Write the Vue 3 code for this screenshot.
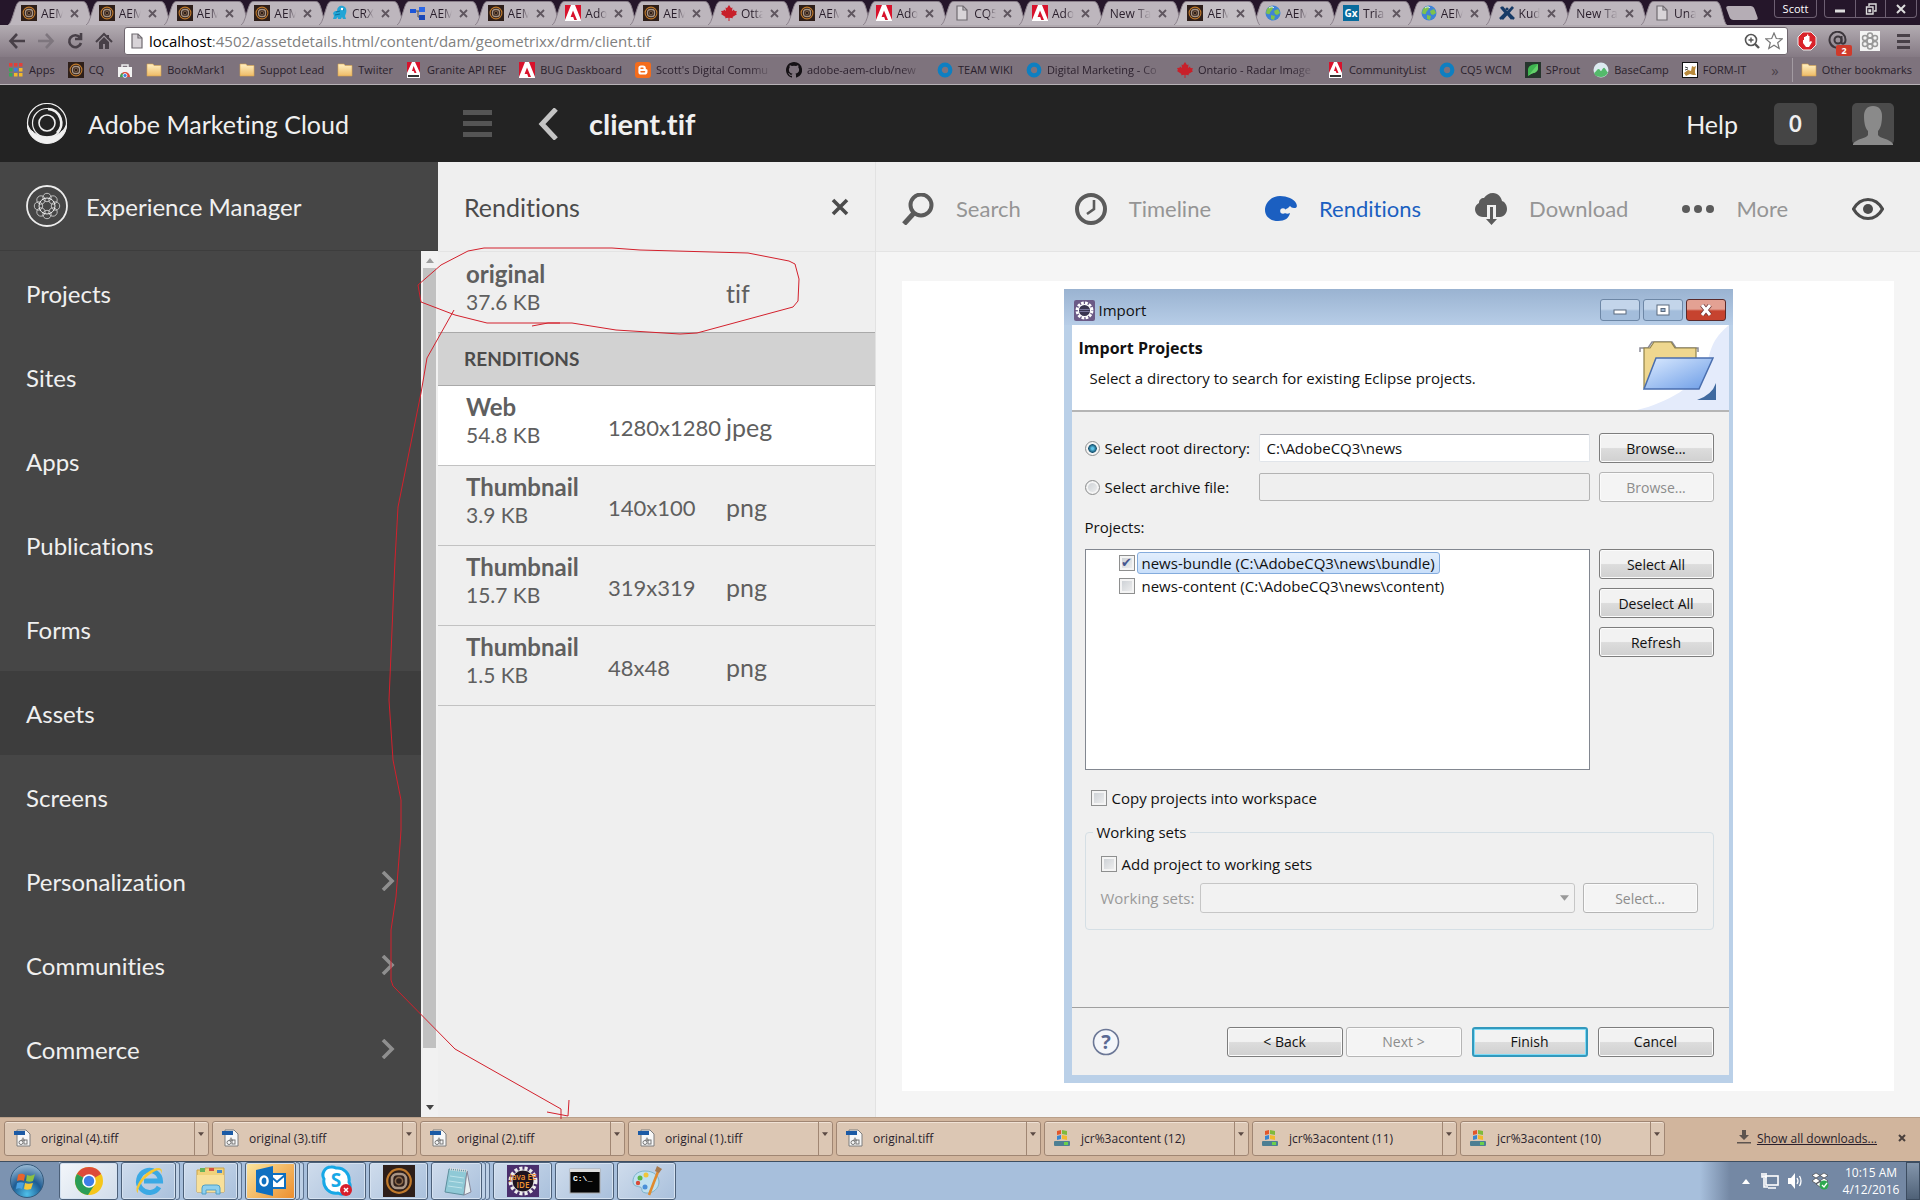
<template>
  <div class="desktop">
    <!-- shared icons -->
    <svg class="sprite" width="0" height="0" aria-hidden="true">
      <defs>
        <linearGradient id="gFolder" x1="0" y1="0" x2="0" y2="1">
          <stop offset="0" stop-color="#fff0c4" /><stop offset="1" stop-color="#eebb66" />
        </linearGradient>
        <linearGradient id="gBlue" x1="0" y1="0" x2="1" y2="1">
          <stop offset="0" stop-color="#dcebff" /><stop offset="1" stop-color="#6a9be6" />
        </linearGradient>
        <radialGradient id="gOrb" cx="0.5" cy="0.9" r="0.9">
          <stop offset="0" stop-color="#4fc0ea" /><stop offset="0.5" stop-color="#1e5c93" /><stop offset="1" stop-color="#9cbcd6" />
        </radialGradient>
      </defs>
      <symbol id="aem" viewBox="0 0 16 16">
        <rect width="16" height="16" fill="#2e1f1a" />
        <circle cx="8" cy="8" r="5.9" fill="none" stroke="#c07a2c" stroke-width="1.1" />
        <rect x="4.5" y="4.5" width="7" height="7" rx="2.6" fill="none" stroke="#a99585" stroke-width="1.3" />
        <circle cx="8" cy="8" r="1.8" fill="none" stroke="#8b6a4c" stroke-width="0.8" />
      </symbol>
      <symbol id="crx" viewBox="0 0 16 16">
        <path d="M5 6C5 2 8 0 11 1c3 1 4 4 3 7l-1 3 1 3h-3l-1-2-1 2H6l0-2-2 2H1l1-3-1-3 2-2z" fill="#22a5d6" />
        <path d="M4 7l4-1M3 10l5-1M9 4l3 1" stroke="#0a6f9b" fill="none" />
        <circle cx="10" cy="4" r="1.2" fill="#fff" />
      </symbol>
      <symbol id="flow" viewBox="0 0 16 16">
        <path d="M5 6h4M8 6v6h2" stroke="#555" fill="none" />
        <rect x="0" y="4" width="6" height="4" fill="#1c55d8" /><rect x="9" y="2" width="6" height="5" fill="#2c68e8" />
        <rect x="9" y="10" width="6" height="5" fill="#1947b8" />
      </symbol>
      <symbol id="adobe" viewBox="0 0 16 16">
        <rect width="16" height="16" fill="#fff" />
        <path d="M0 0h6L0 15zM10 0h6v15zM8 5.5L12 15H9.3L8.2 12H5.6z" fill="#d8122c" />
      </symbol>
      <symbol id="adobeTxt" viewBox="0 0 16 16">
        <rect x="1" width="13" height="16" fill="#fff" />
        <path d="M1 0h5L1 11zM9 0h5v11zM7.6 4L10.500 11H8.500L7.600 9H6z" fill="#d8122c" />
        <rect x="2" y="13" width="11" height="2" fill="#333" />
      </symbol>
      <symbol id="maple" viewBox="0 0 16 16">
        <path d="M8 0l2 3 1.500-.6L11 6l2-1.500.5 1.500 2.500.2-1 2 1 1L11.500 12l.5 1.200-3.500-.4V16h-1v-3.200L4 13.200l.5-1.200L0 9l1-1-1-2 2.500-.2L3 4.500 5 6l-.5-3.600L6 3z" fill="#c8202a" />
      </symbol>
      <symbol id="page" viewBox="0 0 16 16">
        <path d="M3 1h6l4 4v10H3z" fill="#d8d4d8" stroke="#6f6a70" stroke-width="1.200" />
        <path d="M9 1v4h4" fill="none" stroke="#6f6a70" stroke-width="1.200" />
      </symbol>
      <symbol id="globe" viewBox="0 0 16 16">
        <circle cx="8" cy="8" r="7.500" fill="#3f83d6" />
        <path d="M2 4c3-3 6-3 6-1S5 6 5 8 2 9 1 8zM9 6l4-2 2 4-3 2-2-1zM6 10l4 1-1 4-3-1z" fill="#7fc24a" />
        <path d="M4 3c2-1.500 4-1.500 5 0" stroke="#e5f2ff" fill="none" />
      </symbol>
      <symbol id="gx" viewBox="0 0 16 16">
        <rect width="16" height="16" fill="#086b9c" />
        <text x="8" y="12" text-anchor="middle" font-size="10" font-weight="700" font-family="Open Sans, sans-serif" fill="#fff">Gx</text>
      </symbol>
      <symbol id="kudo" viewBox="0 0 16 16">
        <path d="M2 2l5 6-6 6M14 2L9 8l6 6M3 14l11-12M3 2l10 12" stroke="#163a66" stroke-width="2.600" fill="none" />
        <circle cx="8" cy="4" r="1.600" fill="#163a66" />
      </symbol>
      <symbol id="apps" viewBox="0 0 16 16">
        <rect x="1" y="1" width="3.500" height="3.500" fill="#e2403a" /><rect x="6" y="1" width="3.500" height="3.500" fill="#e2403a" /><rect x="11" y="1" width="3.500" height="3.500" fill="#e2403a" />
        <rect x="1" y="6" width="3.500" height="3.500" fill="#3aa757" /><rect x="6" y="6" width="3.500" height="3.500" fill="#3c7de0" /><rect x="11" y="6" width="3.500" height="3.500" fill="#f3b92b" />
        <rect x="1" y="11" width="3.500" height="3.500" fill="#3aa757" /><rect x="6" y="11" width="3.500" height="3.500" fill="#f3b92b" /><rect x="11" y="11" width="3.500" height="3.500" fill="#f3b92b" />
      </symbol>
      <symbol id="store" viewBox="0 0 16 16">
        <path d="M5 5V3h6v2" fill="none" stroke="#eee" stroke-width="1.500" />
        <rect x="1" y="5" width="14" height="10" fill="#f2f2f2" />
        <path d="M3 15a5 5 0 0 1 10 0z" fill="#dc4437" /><path d="M3 15a5 5 0 0 1 2-4l3 4z" fill="#3aa757" /><circle cx="8" cy="13.500" r="2" fill="#3c7de0" stroke="#fff" stroke-width="0.800" />
      </symbol>
      <symbol id="folder" viewBox="0 0 16 16">
        <path d="M1 2h6l1 1.500h7V14H1z" fill="url(#gFolder)" stroke="#d9a64f" stroke-width="0.600" />
      </symbol>
      <symbol id="blogger" viewBox="0 0 16 16">
        <rect width="16" height="16" rx="3" fill="#f36c1c" />
        <path d="M6 3.500h2a2.800 2.800 0 0 1 2.800 2.800c0 .8.400 1 .9 1s.8.300.8.900v1.600A2.800 2.800 0 0 1 9.700 12.600H6a2.600 2.600 0 0 1-2.600-2.600V6.100A2.600 2.600 0 0 1 6 3.500z" fill="#fff" />
        <path d="M6 6.200h2M6 9.800h3.600" stroke="#f36c1c" stroke-width="1.400" stroke-linecap="round" />
      </symbol>
      <symbol id="github" viewBox="0 0 16 16">
        <path d="M8 0C3.600 0 0 3.600 0 8c0 3.500 2.300 6.500 5.500 7.600.4.100.5-.2.500-.4v-1.400c-2.200.5-2.700-1-2.700-1-.4-.9-.9-1.200-.9-1.200-.7-.5.100-.5.100-.5.800.1 1.200.8 1.200.8.700 1.200 1.900.9 2.300.7.100-.5.300-.9.500-1.100-1.800-.2-3.600-.9-3.600-4 0-.9.300-1.600.8-2.100-.1-.2-.4-1 .1-2.100 0 0 .7-.2 2.200.8a7.500 7.500 0 0 1 4 0c1.500-1 2.200-.8 2.200-.8.400 1.100.2 1.900.1 2.100.5.600.8 1.300.8 2.100 0 3.100-1.900 3.800-3.700 4 .3.300.6.800.6 1.500v2.200c0 .2.100.5.600.4A8 8 0 0 0 8 0z" fill="#151115" />
      </symbol>
      <symbol id="ring" viewBox="0 0 16 16">
        <circle cx="8" cy="8" r="5.300" fill="none" stroke="#0e7fc1" stroke-width="4.200" />
      </symbol>
      <symbol id="sprout" viewBox="0 0 16 16">
        <rect width="16" height="16" fill="#26352d" /><path d="M3 14V7c1-4 5-5 10-5v5c-1 4-5 4-7 5z" fill="#3fb550" /><path d="M3 14L13 2v5c-1 4-5 4-7 5z" fill="#63d06a" />
      </symbol>
      <symbol id="basecamp" viewBox="0 0 16 16">
        <circle cx="8" cy="8" r="7.500" fill="#dceaf0" /><path d="M1 11c2-1 3-4 4.500-4S7 9 8 9s2-4 3.500-3S13 9 15 10.500C13 14 11 15 8 15s-6-1-7-4z" fill="#54b96b" />
      </symbol>
      <symbol id="formit" viewBox="0 0 16 16">
        <rect x="0.500" y="0.500" width="15" height="15" fill="#fff" stroke="#111" /><path d="M2 11l4-3 3 1 1-5 2 1 2-1-1 4 0 3 1 2-3 0-3-1-4 2z" fill="#b98a3c" /><path d="M3 5l3 1M3 8l3-1" stroke="#444" />
      </symbol>
      <symbol id="tiff" viewBox="0 0 18 18">
        <path d="M4 1h9l4 4v12H4z" fill="#f7f7f7" stroke="#7d7d7d" />
        <rect x="1" y="2" width="11" height="4" fill="#1b5aa5" />
        <path d="M10 8l2.500 4h-5z" fill="#999" /><circle cx="8" cy="13.500" r="2" fill="none" stroke="#777" /><rect x="11" y="11" width="3" height="4" fill="none" stroke="#777" />
      </symbol>
      <symbol id="jcr" viewBox="0 0 18 18">
        <rect x="1" y="12" width="16" height="5" rx="1" fill="#4d7f93" /><rect x="11" y="13" width="4" height="3" fill="#6bd04c" />
        <path d="M4 2l4-1v4l-4 1z" fill="#e2572b" /><path d="M9 1l5 1v4L9 5z" fill="#7fba3c" /><path d="M4 7l4-1v4l-4 1z" fill="#3a86d0" /><path d="M9 6l5 1v4l-5-1z" fill="#f2b92d" />
      </symbol>
      <symbol id="chrome" viewBox="0 0 32 32">
        <circle cx="16" cy="16" r="14" fill="#f5c61b" />
        <path d="M16 16L3.900 9A14 14 0 0 1 28.200 9z" fill="#dd4b39" />
        <path d="M3.900 9A14 14 0 0 0 15 30l7-11-6-3z" fill="#2a9d57" />
        <circle cx="16" cy="16" r="6.800" fill="#fff" /><circle cx="16" cy="16" r="5.200" fill="#3f7ee8" />
      </symbol>
      <symbol id="ie" viewBox="0 0 32 32">
        <path d="M26 22a11 11 0 1 1 1.500-6H11" fill="none" stroke="#3ba9e4" stroke-width="5" />
        <path d="M5 28C-1 24 12 4 25 3c5 0 4 4 3 6 1-6-4-4-9-1C10 13 4 24 5 28z" fill="#f6c731" />
      </symbol>
      <symbol id="explorer" viewBox="0 0 32 32">
        <path d="M2 5h8v-2h19v24H2z" fill="#f1d27a" stroke="#cfa445" /><path d="M5 3h5v4H5z" fill="#68b35a" /><path d="M14 3h5v3h-5z" fill="#d9503f" /><path d="M22 5h5v3h-5z" fill="#4688c8" />
        <path d="M2 10h27v17H2z" fill="#f8e09a" /><path d="M7 29v-6a3 3 0 0 1 3-3h12a3 3 0 0 1 3 3v6h-4v-4H11v4z" fill="#8fd0ee" stroke="#4f9fc8" />
      </symbol>
      <symbol id="outlook" viewBox="0 0 32 32">
        <rect x="14" y="9" width="16" height="14" fill="#fff" stroke="#0f6fc0" stroke-width="2" /><path d="M14 10l8 7 8-7" stroke="#0f6fc0" stroke-width="2" fill="none" />
        <path d="M1 5l17-4v30L1 27z" fill="#0f6fc0" /><ellipse cx="9" cy="16" rx="3.600" ry="4.600" fill="none" stroke="#fff" stroke-width="2.400" />
      </symbol>
      <symbol id="skype" viewBox="0 0 32 32">
        <path d="M10 2a8 8 0 0 1 5 1 12 12 0 0 1 13 14 8 8 0 0 1-11 11A12 12 0 0 1 3 14 8 8 0 0 1 10 2z" fill="#fff" stroke="#17a8e6" stroke-width="3" />
        <text x="15" y="22" text-anchor="middle" font-family="Open Sans, sans-serif" font-size="19" font-weight="700" fill="#17a8e6">S</text>
        <circle cx="25" cy="25" r="6" fill="#d8202c" /><path d="M23 23l4 4M27 23l-4 4" stroke="#fff" stroke-width="1.500" />
      </symbol>
      <symbol id="notepad" viewBox="0 0 32 32">
        <path d="M8 4l18 2-3 24-19-3z" fill="#8fc9d6" stroke="#5d8f9d" /><path d="M26 6l4 21-7 3z" fill="#e8f0f2" stroke="#889" /><path d="M9 4l17 2" stroke="#ddd" stroke-width="3" stroke-dasharray="1 1" />
        <path d="M9 11l14 2M8 16l14 2M7 21l14 2" stroke="#bde3ea" />
      </symbol>
      <symbol id="java" viewBox="0 0 32 32">
        <rect width="32" height="32" fill="#4a2f6d" /><circle cx="16" cy="16" r="12.500" fill="none" stroke="#eee" stroke-width="4" stroke-dasharray="3 2" /><circle cx="16" cy="16" r="11" fill="#1d1320" stroke="#ddd" />
        <text x="16" y="15" text-anchor="middle" font-family="Open Sans, sans-serif" font-size="8" font-weight="600" fill="#f29331">Java EE</text>
        <text x="16" y="23" text-anchor="middle" font-family="Open Sans, sans-serif" font-size="8" font-weight="600" fill="#f29331">IDE</text>
      </symbol>
      <symbol id="cmd" viewBox="0 0 32 32">
        <rect x="1" y="4" width="30" height="24" fill="#050505" stroke="#aaa" /><rect x="1" y="4" width="30" height="3" fill="#ddd" />
        <text x="4" y="16" font-family="Liberation Mono, monospace" font-size="8" font-weight="700" fill="#fff">C:\_</text>
      </symbol>
      <symbol id="paint" viewBox="0 0 32 32">
        <path d="M14 6c9 0 14 5 14 11S22 29 15 28s-2-5-6-6-7-1-7-6S6 6 14 6z" fill="#bfe0f0" stroke="#7eb3cc" />
        <circle cx="9" cy="13" r="2.500" fill="#5cb648" /><circle cx="15" cy="10" r="2.500" fill="#f0c53a" /><circle cx="7" cy="18" r="2.200" fill="#d84a3a" /><circle cx="14" cy="22" r="2.500" fill="#4a8fd8" />
        <path d="M28 4L18 30" stroke="#e08a2e" stroke-width="2.600" /><path d="M26 1l5 3-3 4-4-2z" fill="#a77a4f" />
      </symbol>
      <symbol id="search" viewBox="0 0 32 32">
        <circle cx="19" cy="12" r="10.500" fill="none" stroke="#5b5b5b" stroke-width="4" /><path d="M12 20L2 31" stroke="#5b5b5b" stroke-width="5" />
      </symbol>
      <symbol id="timeline" viewBox="0 0 32 32">
        <circle cx="16" cy="16" r="14" fill="none" stroke="#5b5b5b" stroke-width="4" /><path d="M19 7v9l-7 5" fill="none" stroke="#5b5b5b" stroke-width="2.600" />
      </symbol>
      <symbol id="renditions" viewBox="0 0 32 32">
        <path d="M15 3C7 3 0 9 0 17c0 7 6 11 13 11 7 0 11-3 12-8-2 1-5 1-6-1 0-2 2-3 4-4l2-2c1 1 2 2 4 2 4 0 3-3 2-5C29 6 22 3 15 3z" fill="#1b5fc1" />
        <circle cx="18" cy="18" r="2.800" fill="#efefef" />
      </symbol>
      <symbol id="download" viewBox="0 0 32 32">
        <path d="M8 24C3 24 0 20 0 16c0-3 2-5 4-6 0-3 2-5 5-5C11 2 14 0 18 0c5 0 8 4 9 8 3 1 5 4 5 8 0 4-3 8-7 8h-4V12H12v12z" fill="#5b5b5b" />
        <path d="M15 14h3v12h4L16.500 32 11 26h4z" fill="#5b5b5b" />
      </symbol>
      <symbol id="more" viewBox="0 0 32 32">
        <circle cx="4" cy="16" r="4" fill="#5b5b5b" /><circle cx="16" cy="16" r="4" fill="#5b5b5b" /><circle cx="28" cy="16" r="4" fill="#5b5b5b" />
      </symbol>
      <symbol id="eye" viewBox="0 0 32 32">
        <path d="M1.500 16C6 8 11 6.500 16 6.500S26 8 30.500 16C26 24 21 25.500 16 25.500S6 24 1.500 16z" fill="none" stroke="#4b4b4b" stroke-width="3.200" /><circle cx="16" cy="16" r="5" fill="#4b4b4b" />
      </symbol>
    </svg>

    <!-- browser tabs -->
    <div class="tabStrip">
      <div class="tabs">
        <button v-for="(tab, index) in tabs" :key="index" class="tab" :class="{ active: index === activeTab }" @click="activeTab = index">
          <svg class="tabShape" viewBox="0 0 86 24" preserveAspectRatio="none" aria-hidden="true">
            <path d="M0 24C4 23 7 4 10 1.500Q11 0.500 13 0.500H75Q77 0.500 78 2C81 6 83 22 86 24" />
          </svg>
          <svg v-if="tab.icon" class="fav"><use :href="'#' + tab.icon" /></svg>
          <span class="tabTitle">{{ tab.title }}</span>
          <svg class="tabClose" viewBox="0 0 9 9"><path d="M1 1l7 7M8 1L1 8" stroke="#5f565f" stroke-width="1.800" /></svg>
        </button>
      </div>
      <div class="newTab"></div>
      <button class="userBtn">Scott</button>
      <div class="winBtns">
        <button aria-label="Minimize"><svg viewBox="0 0 12 12"><path d="M1 8h10" stroke="#ddd" stroke-width="3" /></svg></button>
        <button aria-label="Restore"><svg viewBox="0 0 12 12"><path d="M4 3V1h7v7H9M1.500 4h6.500v7H1.500zM4 7h1.500v1.500H4z" fill="none" stroke="#ddd" stroke-width="1.400" /></svg></button>
        <button aria-label="Close"><svg viewBox="0 0 12 12"><path d="M2 2l8 8M10 2l-8 8" stroke="#ddd" stroke-width="2" /></svg></button>
      </div>
    </div>

    <!-- address bar -->
    <div class="addressBar">
      <button class="navBtn" aria-label="Back"><svg viewBox="0 0 18 18"><path d="M17 9H3M9 2L2.500 9 9 16" fill="none" stroke="#484048" stroke-width="2.600" /></svg></button>
      <button class="navBtn" aria-label="Forward"><svg viewBox="0 0 18 18"><path d="M1 9h14M9 2l6.500 7L9 16" fill="none" stroke="#7e767e" stroke-width="2.600" /></svg></button>
      <button class="navBtn" aria-label="Reload"><svg viewBox="0 0 18 18"><path d="M14 5.500A6 6 0 1 0 15 11M15 1v6H9" fill="none" stroke="#484048" stroke-width="2.600" /></svg></button>
      <button class="navBtn" aria-label="Home"><svg viewBox="0 0 18 18"><path d="M1 10L9 2l8 8M13 3v4" fill="none" stroke="#484048" stroke-width="2" /><path d="M4 10l5-5 5 5v7h-4v-5H8v5H4z" fill="#484048" /></svg></button>
      <div class="urlBox">
        <svg class="fav"><use href="#page" /></svg>
        <a class="url" href="#"><b>localhost</b>:4502/assetdetails.html/content/dam/geometrixx/drm/client.tif</a>
        <svg class="urlIcon" viewBox="0 0 18 18"><circle cx="8" cy="8" r="5.500" fill="none" stroke="#555" stroke-width="1.600" /><path d="M12 12l4 4" stroke="#555" stroke-width="2.400" /><path d="M5.500 8h5M8 5.500v5" stroke="#555" stroke-width="1.400" /></svg>
        <svg class="urlIcon" viewBox="0 0 18 18"><path d="M9 1l2.300 5.500 6 .4-4.600 3.800 1.500 5.800L9 13.300l-5.200 3.200 1.500-5.800L.7 6.900l6-.4z" fill="#fff" stroke="#777" stroke-width="1.200" /></svg>
      </div>
      <svg class="ext" viewBox="0 0 20 20"><path d="M6 1h8l5 5v8l-5 5H6l-5-5V6z" fill="#d9232a" stroke="#eee" /><path d="M6 9v3l3 4h3l3-5-1-1-1.500 1V5h-1.200V3.500H10V5H8.500v1H7v3z" fill="#fff" /></svg>
      <div class="mailExt">
        <svg class="ext" viewBox="0 0 20 20"><circle cx="10" cy="9" r="3.500" fill="none" stroke="#3c363c" stroke-width="2" /><path d="M13.500 5v6c0 3 4 2 4-2A8 8 0 1 0 13 16" fill="none" stroke="#3c363c" stroke-width="2" /></svg>
        <span class="extBadge">2</span>
      </div>
      <svg class="ext" viewBox="0 0 20 20"><rect width="20" height="20" fill="#f3f3f3" /><g fill="none" stroke="#999" stroke-width="1.500"><circle cx="10" cy="10" r="3" /><circle cx="10" cy="4.500" r="2.500" /><circle cx="10" cy="15.500" r="2.500" /><circle cx="5" cy="7" r="2.500" /><circle cx="15" cy="7" r="2.500" /><circle cx="5" cy="13" r="2.500" /><circle cx="15" cy="13" r="2.500" /></g></svg>
      <button class="menuBtn" aria-label="Menu"><i></i><i></i><i></i></button>
    </div>

    <!-- bookmarks -->
    <div class="bookmarks">
      <a v-for="mark in bookmarks" :key="mark.title" class="mark" href="#">
        <svg class="fav"><use :href="'#' + mark.icon" /></svg>
        <span v-if="mark.title" :class="{ faded: mark.faded }">{{ mark.title }}</span>
      </a>
      <span class="moreMarks">»</span>
      <a class="mark otherMarks" href="#"><svg class="fav"><use href="#folder" /></svg><span>Other bookmarks</span></a>
    </div>

    <header class="appHeader">
      <svg class="cloudLogo" viewBox="0 0 42 42" fill="none" stroke="#f0f0f0">
        <circle cx="21" cy="20" r="19.500" stroke-width="1.200" /><path d="M1.500 22a19.500 18.500 0 0 0 39 0 20.500 17 0 0 1-39 0z" fill="#f0f0f0" />
        <circle cx="21" cy="20" r="14.500" stroke-width="1.200" /><path d="M22 6a14 14 0 0 1 9 24" stroke-width="2.600" />
        <circle cx="21" cy="20" r="8" stroke-width="1.600" />
      </svg>
      <span class="cloudName">Adobe Marketing Cloud</span>
      <button class="railToggle" aria-label="Toggle navigation"><i></i><i></i><i></i></button>
      <button class="backBtn" aria-label="Back"><svg viewBox="0 0 20 32"><path d="M18 1L4 16l14 15" fill="none" stroke="#c4c4c4" stroke-width="5" /></svg></button>
      <h1>client.tif</h1>
      <a class="help" href="#">Help</a>
      <button class="counter">0</button>
      <svg class="avatar" viewBox="0 0 42 42"><rect width="42" height="42" rx="5" fill="#4b4b4b" /><path d="M21 3c6 0 9 4 9 10s-1 12-4 15v4c2 4 11 3 15 9v1H1v-1c4-6 13-5 15-9v-4c-3-3-4-9-4-15s3-10 9-10z" fill="#8a8a8a" /></svg>
    </header>

    <div class="appBody">
      <!-- left navigation -->
      <aside class="sidebar">
        <div class="product">
          <svg viewBox="0 0 42 42" fill="none" stroke="#ececec">
            <circle cx="21" cy="21" r="20" stroke-width="1.800" />
            <circle v-for="n in 8" :key="n" :cx="21 + 8.500 * Math.cos(n * Math.PI / 4)" :cy="21 + 8.500 * Math.sin(n * Math.PI / 4)" r="4.200" stroke-width="0.700" />
            <circle cx="21" cy="21" r="8" stroke-width="1" />
          </svg>
          <span>Experience Manager</span>
        </div>
        <div class="navWrap">
          <nav>
            <a v-for="item in navItems" :key="item.title" href="#" :class="{ current: item.title === 'Assets' }">
              {{ item.title }}
              <svg v-if="item.children" viewBox="0 0 14 20"><path d="M2 1l9 9-9 9" fill="none" stroke="#8f8f8f" stroke-width="3.600" /></svg>
            </a>
          </nav>
          <div class="scrollbar">
            <svg viewBox="0 0 8 5"><path d="M4 0l4 5H0z" fill="#9c9c9c" /></svg>
            <div class="thumb"></div>
            <svg viewBox="0 0 8 5"><path d="M0 0h8L4 5z" fill="#444" /></svg>
          </div>
        </div>
      </aside>

      <!-- renditions rail -->
      <section class="rail">
        <div class="railTitle">
          <h2>Renditions</h2>
          <button aria-label="Close"><svg viewBox="0 0 18 18"><path d="M2 2l14 14M16 2L2 16" stroke="#4b4b4b" stroke-width="3.600" /></svg></button>
        </div>
        <div class="rendition original">
          <div><strong>original</strong><small>37.6 KB</small></div>
          <span></span>
          <span class="type">tif</span>
        </div>
        <h3>RENDITIONS</h3>
        <div v-for="(item, index) in renditions" :key="index" class="rendition" :class="{ selected: index === activeRendition }" @click="activeRendition = index">
          <div><strong>{{ item.name }}</strong><small>{{ item.size }}</small></div>
          <span>{{ item.dims }}</span>
          <span class="type">{{ item.type }}</span>
        </div>
      </section>

      <main class="content">
        <div class="actions">
          <button v-for="action in actions" :key="action.title" :class="{ active: action.title === 'Renditions' }">
            <svg><use :href="'#' + action.icon" /></svg>{{ action.title }}
          </button>
          <button class="preview" aria-label="Preview"><svg><use href="#eye" /></svg></button>
        </div>

        <div class="stage">
          <div class="dialog">
            <div class="dialogBar">
              <svg class="eclipse" viewBox="0 0 20 20"><rect width="20" height="20" rx="2" fill="#6b5a86" /><circle cx="10" cy="10" r="7" fill="none" stroke="#fff" stroke-width="3" stroke-dasharray="2.500 1.200" /><circle cx="10" cy="10" r="5.800" fill="#3a3550" stroke="#fff" /><path d="M5 9h10M5 11h10" stroke="#77749a" /></svg>
              <span>Import</span>
              <button aria-label="Minimize"><svg viewBox="0 0 16 12"><rect x="2" y="6" width="12" height="4" fill="#fff" stroke="#5b6b7f" /></svg></button>
              <button aria-label="Maximize"><svg viewBox="0 0 16 12"><rect x="2" y="1" width="12" height="10" fill="#fff" stroke="#5b6b7f" /><rect x="6" y="4.500" width="4" height="3" fill="#9db6d3" stroke="#5b6b7f" /></svg></button>
              <button class="closeBtn" aria-label="Close"><svg viewBox="0 0 16 12"><path d="M4 1l8 10M12 1L4 11" stroke="#6b3434" stroke-width="4.500" /><path d="M4 1l8 10M12 1L4 11" stroke="#fff" stroke-width="3" /></svg></button>
            </div>
            <div class="dialogInner">
              <div class="banner">
                <div>
                  <h4>Import Projects</h4>
                  <p>Select a directory to search for existing Eclipse projects.</p>
                </div>
                <svg viewBox="0 0 92 85">
                  <path d="M92 0C78 12 74 20 70 40 60 60 30 78 0 85h92z" fill="#e4ebfb" />
                  <path d="M3 27v-4h8l4-6h20l4 6h22v4" fill="none" stroke="#8a8a96" stroke-width="1.500" />
                  <path d="M7 23h6l4-6h17l4 6h21v40H7z" fill="#efd78f" stroke="#8f8148" stroke-width="1.200" />
                  <path d="M19 33h57L62 64H7z" fill="url(#gBlue)" stroke="#4a6eae" stroke-width="1.500" />
                  <path d="M79 58v17H60q15-5 19-17z" fill="#3f699f" />
                </svg>
              </div>
              <form class="importForm" @submit.prevent>
                <div class="formRow">
                  <label><input type="radio" name="source" value="root" v-model="source">Select root directory:</label>
                  <input type="text" aria-label="Root directory" v-model="rootDir">
                  <button>Browse...</button>
                </div>
                <div class="formRow">
                  <label><input type="radio" name="source" value="archive" v-model="source">Select archive file:</label>
                  <input type="text" aria-label="Archive file" disabled>
                  <button disabled>Browse...</button>
                </div>
                <p class="projectsLabel">Projects:</p>
                <div class="projects">
                  <div class="projectList">
                    <label v-for="project in projects" :key="project.name">
                      <input type="checkbox" v-model="project.checked">
                      <span :class="{ highlighted: project.checked }">{{ project.name }}</span>
                    </label>
                  </div>
                  <div class="projectBtns">
                    <button>Select All</button>
                    <button>Deselect All</button>
                    <button>Refresh</button>
                  </div>
                </div>
                <label class="copyRow"><input type="checkbox">Copy projects into workspace</label>
                <fieldset>
                  <legend>Working sets</legend>
                  <label><input type="checkbox">Add project to working sets</label>
                  <div class="setRow">
                    <label for="sets">Working sets:</label>
                    <div class="selectBox">
                      <select id="sets" disabled><option></option></select>
                      <svg viewBox="0 0 8 5"><path d="M0 0h8L4 5z" fill="#999" /></svg>
                    </div>
                    <button disabled>Select...</button>
                  </div>
                </fieldset>
              </form>
              <div class="dialogFooter">
                <svg viewBox="0 0 28 28"><circle cx="14" cy="14" r="12.500" fill="#f4f6fa" stroke="#6b7796" stroke-width="1.600" /><text x="14" y="21" text-anchor="middle" font-family="Open Sans, sans-serif" font-size="20" font-weight="700" fill="#5b6a94">?</text></svg>
                <button>&lt; Back</button>
                <button class="next" disabled>Next &gt;</button>
                <button class="finish">Finish</button>
                <button>Cancel</button>
              </div>
            </div>
          </div>
        </div>
      </main>
    </div>

    <!-- downloads -->
    <div class="downloads">
      <div v-for="file in downloads" :key="file.name" class="download">
        <svg><use :href="'#' + file.icon" /></svg>
        <span>{{ file.name }}</span>
        <button :aria-label="'Options for ' + file.name"><svg viewBox="0 0 8 5"><path d="M0 0h8L4 5z" fill="#5b4a44" /></svg></button>
      </div>
      <a class="showAll" href="#"><svg viewBox="0 0 14 14"><path d="M5 0h4v5h3L7 10 2 5h3zM0 12h14v1.500H0z" fill="#5d544f" /></svg><span>Show all downloads...</span></a>
      <button class="closeShelf" aria-label="Close"><svg viewBox="0 0 8 8"><path d="M1 1l6 6M7 1L1 7" stroke="#4a403c" stroke-width="2" /></svg></button>
    </div>

    <!-- taskbar -->
    <footer class="taskbar">
      <button class="start" aria-label="Start">
        <svg viewBox="0 0 36 36"><circle cx="18" cy="18" r="16.500" fill="url(#gOrb)" stroke="#355a7c" /><path d="M9 12c3-2 5-1 7 0l-1 6c-2-1-5-1-7 0z" fill="#e8642c" /><path d="M18 12c3 1 5 1 8-1l-2 7c-2 1-5 1-7 0z" fill="#8cc043" /><path d="M8 20c2-1 5-1 7 0l-2 6c-2-1-4-1-6 0z" fill="#4aa0e0" /><path d="M16 20c2 1 5 1 8 0l-2 6c-3 1-5 1-7 0z" fill="#f6c836" /></svg>
      </button>
      <div v-for="app in apps" :key="app.icon" class="app" :class="app.state">
        <button :aria-label="app.icon"><svg><use :href="'#' + app.icon" /></svg></button>
        <i v-for="n in app.stack" :key="n"></i>
      </div>
      <div class="tray">
        <svg class="up" viewBox="0 0 8 5"><path d="M4 0l4 5H0z" fill="#fff" /></svg>
        <svg viewBox="0 0 18 18"><rect x="5" y="4" width="12" height="9" fill="#6f84a0" stroke="#fff" stroke-width="1.600" /><path d="M7 16h8M3 1v4M1 1v4h4V1M3 6v9h4" stroke="#fff" stroke-width="1.600" fill="none" /></svg>
        <svg viewBox="0 0 18 18"><path d="M2 6h3l4-5v16l-4-5H2z" fill="#fff" /><path d="M11 6q2 3 0 6M13.500 4q3 5 0 10" stroke="#fff" stroke-width="1.300" fill="none" /></svg>
        <svg viewBox="0 0 18 18"><path d="M5 1l4 2.500L5 6 1 3.500zM13 1l4 2.500L13 6 9 3.500zM5 6l4 3-4 2.500L1 9zM13 6l4 3-4 2.500L9 9zM5 12l4-2 4 2-4 3z" fill="#fff" stroke="#333" stroke-width="0.600" /><circle cx="13" cy="13" r="4.500" fill="#2fa84f" /><path d="M11 13l2 2 3-4" stroke="#fff" stroke-width="1.300" fill="none" /></svg>
        <div class="clock"><span>10:15 AM</span><span>4/12/2016</span></div>
        <button class="showDesktop" aria-label="Show desktop"></button>
      </div>
    </footer>

    <!-- pen marks -->
    <svg class="ink" aria-hidden="true">
      <path d="M484 248H612L640 250 748 253 789 261 795 264 799 279 798 301 793 307 697 333 680 334 616 330 572 323H487L455 315 421 302 418 285 441 265 468 251Z" />
      <path d="M532 326L548 323H560" />
      <path d="M454 310L427 358 421 393 398 507 395 560 389 700 393 760 401 800V830L400 845 396 897 391 930V980L393 986 455 1049 561 1109V1119M547 1112L568 1116 569 1100" />
    </svg>
  </div>
</template>

<script setup>
import { ref } from "vue";

const activeTab = ref(15);
const tabs = [
  { title: "AEM", icon: "aem" },
  { title: "AEM", icon: "aem" },
  { title: "AEM", icon: "aem" },
  { title: "AEM", icon: "aem" },
  { title: "CRX", icon: "crx" },
  { title: "AEM", icon: "flow" },
  { title: "AEM", icon: "aem" },
  { title: "Ado", icon: "adobe" },
  { title: "AEM", icon: "aem" },
  { title: "Otta", icon: "maple" },
  { title: "AEM", icon: "aem" },
  { title: "Ado", icon: "adobe" },
  { title: "CQ5", icon: "page" },
  { title: "Ado", icon: "adobe" },
  { title: "New Tab" },
  { title: "AEM", icon: "aem" },
  { title: "AEM", icon: "globe" },
  { title: "Tria", icon: "gx" },
  { title: "AEM", icon: "globe" },
  { title: "Kud", icon: "kudo" },
  { title: "New Tab" },
  { title: "Una", icon: "page" },
];

const bookmarks = [
  { title: "Apps", icon: "apps" },
  { title: "CQ", icon: "aem" },
  { title: "", icon: "store" },
  { title: "BookMark1", icon: "folder" },
  { title: "Suppot Lead", icon: "folder" },
  { title: "Twiiter", icon: "folder" },
  { title: "Granite API REF", icon: "adobeTxt" },
  { title: "BUG Daskboard", icon: "adobe" },
  { title: "Scott's Digital Commu", icon: "blogger", faded: true },
  { title: "adobe-aem-club/new", icon: "github", faded: true },
  { title: "TEAM WIKI", icon: "ring" },
  { title: "Digital Marketing - Co", icon: "ring", faded: true },
  { title: "Ontario - Radar Image", icon: "maple", faded: true },
  { title: "CommunityList", icon: "adobeTxt" },
  { title: "CQ5 WCM", icon: "ring" },
  { title: "SProut", icon: "sprout" },
  { title: "BaseCamp", icon: "basecamp" },
  { title: "FORM-IT", icon: "formit" },
];

const navItems = [
  { title: "Projects" },
  { title: "Sites" },
  { title: "Apps" },
  { title: "Publications" },
  { title: "Forms" },
  { title: "Assets" },
  { title: "Screens" },
  { title: "Personalization", children: true },
  { title: "Communities", children: true },
  { title: "Commerce", children: true },
];

const activeRendition = ref(0);
const renditions = [
  { name: "Web", size: "54.8 KB", dims: "1280x1280", type: "jpeg" },
  { name: "Thumbnail", size: "3.9 KB", dims: "140x100", type: "png" },
  { name: "Thumbnail", size: "15.7 KB", dims: "319x319", type: "png" },
  { name: "Thumbnail", size: "1.5 KB", dims: "48x48", type: "png" },
];

const actions = [
  { title: "Search", icon: "search" },
  { title: "Timeline", icon: "timeline" },
  { title: "Renditions", icon: "renditions" },
  { title: "Download", icon: "download" },
  { title: "More", icon: "more" },
];

// import dialog
const source = ref("root");
const rootDir = ref("C:\\AdobeCQ3\\news");
const projects = ref([
  { name: "news-bundle (C:\\AdobeCQ3\\news\\bundle)", checked: true },
  { name: "news-content (C:\\AdobeCQ3\\news\\content)", checked: false },
]);

const downloads = [
  { name: "original (4).tiff", icon: "tiff" },
  { name: "original (3).tiff", icon: "tiff" },
  { name: "original (2).tiff", icon: "tiff" },
  { name: "original (1).tiff", icon: "tiff" },
  { name: "original.tiff", icon: "tiff" },
  { name: "jcr%3acontent (12)", icon: "jcr" },
  { name: "jcr%3acontent (11)", icon: "jcr" },
  { name: "jcr%3acontent (10)", icon: "jcr" },
];

const apps = [
  { icon: "chrome", state: "front", stack: 0 },
  { icon: "ie", stack: 1 },
  { icon: "explorer", stack: 1 },
  { icon: "outlook", state: "alert", stack: 2 },
  { icon: "skype", stack: 0 },
  { icon: "aem", stack: 0 },
  { icon: "notepad", stack: 2 },
  { icon: "java", stack: 0 },
  { icon: "cmd", stack: 0 },
  { icon: "paint", stack: 0 },
];
</script>

<style>
body {
  margin: 0;
}
</style>

<style scoped>
.desktop {
  position: relative;
  display: flex;
  flex-direction: column;
  height: 100vh;
  overflow: hidden;
  font-family: "Open Sans", "Noto Sans", sans-serif;
  font-size: 12px;
  font-variant-ligatures: none;
  color: #2a1f2c;
}
.desktop * {
  box-sizing: border-box;
}
.sprite {
  position: absolute;
}
svg {
  display: block;
  flex: none;
}
button {
  font: inherit;
  color: inherit;
  padding: 0;
  border: 0;
  background: none;
}
a {
  color: inherit;
  text-decoration: none;
}
h1, h2, h3, h4, p {
  margin: 0;
}
.fav {
  width: 16px;
  height: 16px;
}

/* tabs */
.tabStrip {
  display: flex;
  height: 25px;
  padding-left: 9px;
  background: #25162a;
}
.tabs {
  display: flex;
  flex: 1;
  min-width: 0;
  padding-top: 1px;
}
.tab {
  position: relative;
  display: flex;
  align-items: center;
  flex: 1;
  min-width: 0;
  padding: 0 5px 0 12px;
  gap: 4px;
}
.tabShape {
  position: absolute;
  left: -1px;
  top: 0;
  width: calc(100% + 8px);
  height: 24px;
  fill: #bdb6bd;
  stroke: #8b818b;
}
.tab.active {
  z-index: 1;
}
.tab.active .tabShape {
  fill: #c4bfc4;
}
.tab .fav, .tabTitle, .tabClose {
  position: relative;
}
.tabTitle {
  flex: 1;
  min-width: 0;
  overflow: hidden;
  white-space: nowrap;
  text-align: left;
  mask-image: linear-gradient(90deg, #000 60%, transparent);
}
.tabClose {
  width: 9px;
  height: 9px;
  margin: 0 3px;
}
.newTab {
  flex: none;
  width: 28px;
  height: 14px;
  margin: 6px 18px 0 8px;
  border-radius: 3px;
  background: #b5adb5;
  transform: skewX(20deg);
}
.userBtn {
  flex: none;
  width: 43px;
  height: 18px;
  border: 1px solid #6d5f72;
  border-top: 0;
  border-radius: 0 0 4px 4px;
  font-size: 11px;
  line-height: 16px;
  color: #fff;
}
.winBtns {
  display: flex;
  flex: none;
  width: 93px;
  height: 18px;
  margin: 0 3px 0 7px;
  border: 1px solid #6d5f72;
  border-top: 0;
  border-radius: 0 0 4px 4px;
}
.winBtns button {
  display: flex;
  flex: 1;
  align-items: center;
  justify-content: center;
}
.winBtns button + button {
  border-left: 1px solid #6d5f72;
}
.winBtns svg {
  width: 12px;
  height: 12px;
}

/* address bar */
.addressBar {
  display: flex;
  align-items: center;
  height: 32px;
  padding: 0 10px 0 8px;
  background: linear-gradient(#b3acb2, #857a84);
}
.navBtn {
  width: 29px;
}
.navBtn svg {
  width: 18px;
  height: 18px;
}
.urlBox {
  display: flex;
  flex: 1;
  align-items: center;
  gap: 4px;
  height: 28px;
  padding: 0 4px;
  border: 1px solid #6f666e;
  border-radius: 3px;
  background: #fff;
}
.url {
  flex: 1;
  font-size: 15px;
  color: #808080;
}
.url b {
  font-weight: 400;
  color: #000;
}
.urlIcon {
  width: 18px;
  height: 18px;
}
.ext {
  width: 20px;
  height: 20px;
  margin-left: 9px;
}
.mailExt {
  position: relative;
  margin: 0 3px 0 2px;
}
.extBadge {
  position: absolute;
  right: -4px;
  bottom: -5px;
  width: 16px;
  border-radius: 2px;
  background: #cf3a2b;
  font-size: 9px;
  font-weight: 700;
  line-height: 11px;
  text-align: center;
  color: #fff;
}
.menuBtn {
  display: grid;
  gap: 3px;
  width: 13px;
  margin-left: 17px;
}
.menuBtn i {
  height: 3px;
  background: #484048;
}

/* bookmarks */
.bookmarks {
  display: flex;
  align-items: center;
  gap: 13px;
  height: 28px;
  padding: 0 8px 2px;
  border-bottom: 1px solid #b8b2b7;
  background: #7e737d;
  font-size: 11px;
  white-space: nowrap;
}
.mark {
  display: flex;
  align-items: center;
  gap: 5px;
}
.faded {
  width: 117px;
  overflow: hidden;
  mask-image: linear-gradient(90deg, #000 80%, transparent);
}
.moreMarks {
  margin-left: auto;
  font-size: 15px;
  color: #4b424b;
}
.otherMarks {
  height: 24px;
  padding-left: 8px;
  border-left: 1px solid #a39ba2;
}

/* app header */
.appHeader {
  display: flex;
  align-items: center;
  flex: none;
  height: 77px;
  padding: 0 26px;
  background: #232323;
  font-family: Lato, sans-serif;
  font-size: 25px;
  color: #f0f0f0;
}
.cloudLogo {
  width: 42px;
  height: 42px;
}
.cloudName {
  flex: none;
  width: 395px;
  padding-left: 20px;
}
.railToggle {
  display: grid;
  gap: 6px;
  width: 29px;
  margin-right: 46px;
}
.railToggle i {
  height: 5px;
  background: #555;
}
.backBtn {
  margin-right: 31px;
}
.backBtn svg {
  width: 20px;
  height: 32px;
}
.appHeader h1 {
  flex: 1;
  font-size: 29px;
  font-weight: 700;
}
.counter {
  width: 43px;
  height: 42px;
  margin: 0 35px 0 36px;
  border-radius: 5px;
  background: #454545;
  font-size: 22px;
  font-weight: 700;
}
.avatar {
  width: 42px;
  height: 42px;
}

.appBody {
  display: flex;
  flex: 1;
  min-height: 0;
  font-family: Lato, sans-serif;
}

/* left navigation */
.sidebar {
  display: flex;
  flex-direction: column;
  flex: none;
  width: 438px;
  background: #464646;
  font-size: 24px;
  color: #f0f0f0;
}
.product {
  display: flex;
  align-items: center;
  flex: none;
  gap: 18px;
  height: 89px;
  padding-left: 26px;
  border-bottom: 1px solid #3d3d3d;
}
.product svg {
  width: 42px;
  height: 42px;
}
.navWrap {
  display: flex;
  flex: 1;
  min-height: 0;
}
nav {
  flex: 1;
  overflow: hidden;
}
nav a {
  display: flex;
  align-items: center;
  justify-content: space-between;
  height: 84px;
  padding: 0 26px;
}
nav a.current {
  background: #3d3d3d;
}
nav svg {
  width: 14px;
  height: 20px;
}
.scrollbar {
  display: flex;
  flex-direction: column;
  align-items: center;
  justify-content: space-between;
  width: 17px;
  padding: 7px 0;
  background: #f1f1f1;
}
.scrollbar svg {
  width: 8px;
  height: 5px;
}
.thumb {
  flex: 0 1 780px;
  width: 13px;
  margin: 5px 0 auto;
  background: #c1c1c1;
}

/* renditions rail */
.rail {
  flex: none;
  width: 438px;
  border-right: 1px solid #e2e2e2;
  background: #efefef;
  color: #5f5f5f;
}
.railTitle {
  display: flex;
  align-items: center;
  justify-content: space-between;
  height: 90px;
  padding: 0 26px;
  border-bottom: 1px solid #e4e4e4;
  color: #4b4b4b;
}
.railTitle h2 {
  font-size: 25px;
  font-weight: 400;
}
.railTitle svg {
  width: 18px;
  height: 18px;
}
.rail h3 {
  height: 53px;
  padding-left: 26px;
  border-bottom: 1px solid #a9a9a9;
  background: #d2d2d2;
  font-size: 19px;
  font-weight: 700;
  line-height: 52px;
  color: #4b4b4b;
}
.rendition {
  display: grid;
  grid-template-columns: 142px 118px 1fr;
  align-items: center;
  height: 80px;
  padding-left: 28px;
  border-bottom: 1px solid #c2c2c2;
  font-size: 22px;
}
.rendition.original {
  height: 81px;
  border-color: #a9a9a9;
}
.rendition.selected {
  background: #fff;
}
.rendition div {
  display: grid;
  padding-bottom: 9px;
  line-height: 28px;
}
.rendition strong {
  font-size: 24px;
}
.rendition small {
  font-size: 21px;
}
.rendition span {
  padding-top: 4px;
}
.rendition .type {
  padding-top: 2px;
  font-size: 25px;
}

/* content */
.content {
  display: flex;
  flex-direction: column;
  flex: 1;
  min-width: 0;
  background: #f5f5f5;
}
.actions {
  display: flex;
  align-items: center;
  flex: none;
  gap: 54px;
  height: 90px;
  padding: 4px 36px 0 26px;
  border-bottom: 1px solid #e4e4e4;
  background: #efefef;
}
.actions button {
  display: flex;
  align-items: center;
  gap: 22px;
  font-size: 22px;
  color: #959595;
}
.actions button.active {
  color: #1b5fc1;
}
.actions svg {
  width: 32px;
  height: 32px;
}
.actions .preview {
  margin-left: auto;
}
.stage {
  display: flex;
  justify-content: center;
  flex: 1;
  min-height: 0;
  margin: 29px 26px 26px;
  padding: 8px 0;
  background: #fff;
}

/* import dialog */
.dialog {
  display: flex;
  flex-direction: column;
  width: 669px;
  padding: 0 4px 8px 8px;
  background: #bad0e8;
  font-family: "Open Sans", "Noto Sans", sans-serif;
  font-size: 15px;
  color: #111;
}
.dialogBar {
  display: flex;
  align-items: center;
  flex: none;
  gap: 3px;
  height: 36px;
  margin: 0 -4px 0 -8px;
  padding: 6px 7px 0 10px;
  background: linear-gradient(#9ab3d1, #b7cde7);
}
.eclipse {
  width: 21px;
  height: 21px;
}
.dialogBar span {
  flex: 1;
  padding-left: 1px;
}
.dialogBar button {
  display: flex;
  align-items: center;
  justify-content: center;
  width: 40px;
  height: 22px;
  border: 1px solid #6d87a6;
  border-radius: 3px;
  background: linear-gradient(#c3d5ea 45%, #a3bddb 55%);
}
.dialogBar .closeBtn {
  border-color: #5a2a2a;
  background: linear-gradient(#e3a193 45%, #c6432f 55%);
}
.dialogBar button svg {
  width: 16px;
  height: 12px;
}
.dialogInner {
  display: flex;
  flex-direction: column;
  flex: 1;
  background: #f0f0f0;
}
.banner {
  display: flex;
  justify-content: space-between;
  height: 87px;
  border-bottom: 2px solid #b5b5b5;
  background: #fff;
}
.banner h4 {
  padding: 13px 0 10px 7px;
  font-size: 16px;
  font-weight: 700;
  line-height: 20px;
}
.banner p {
  padding-left: 18px;
  line-height: 20px;
}
.banner svg {
  width: 92px;
  height: 85px;
}
.importForm {
  flex: 1;
  padding: 21px 15px 0 13px;
}
.dialog label {
  display: flex;
  align-items: center;
  gap: 5px;
}
.formRow {
  display: grid;
  grid-template-columns: 165px 1fr 115px;
  gap: 9px;
  margin-bottom: 9px;
}
.formRow label {
  white-space: nowrap;
}
.importForm button, .dialogFooter button {
  width: 115px;
  height: 30px;
  border: 1px solid #7d7d7d;
  border-radius: 3px;
  box-shadow: inset 0 0 0 1px #fbfbfb;
  background: linear-gradient(#f2f2f2 48%, #dcdcdc 52%, #d0d0d0);
  font-size: 14px;
}
.importForm button:disabled, .dialogFooter button:disabled {
  border-color: #b5b5b5;
  background: #f4f4f4;
  color: #8c8c8c;
}
.importForm input[type="text"] {
  width: 100%;
  height: 28px;
  margin-top: 1px;
  padding: 0 7px;
  border: 1px solid #e1e5ea;
  border-top-color: #abadb3;
  border-radius: 2px;
  background: #fff;
  font: inherit;
  color: #111;
}
.importForm input[type="text"]:disabled {
  border-color: #b3b3b3;
  background: #efefef;
}
input[type="radio"], input[type="checkbox"] {
  flex: none;
  appearance: none;
  width: 16px;
  height: 16px;
  margin: 0;
  border: 1px solid #8e8f8f;
  box-shadow: inset 0 0 0 2px #f4f4f4;
  background: linear-gradient(135deg, #c8cdd2, #f2f2f2);
}
input[type="radio"] {
  width: 15px;
  height: 15px;
  border-radius: 50%;
}
input[type="radio"]:checked {
  background: radial-gradient(circle, #5cc3e8 0 1px, #14516f 4px, #f4f4f4 5px);
}
input[type="checkbox"]:checked::before {
  content: "✔";
  display: block;
  font-size: 13px;
  line-height: 13px;
  text-align: center;
  color: #45578f;
}
.projectsLabel {
  padding: 6px 0 12px;
  line-height: 20px;
}
.projects {
  display: flex;
  gap: 9px;
}
.projectList {
  flex: 1;
  height: 221px;
  padding: 1px 0 0 33px;
  border: 1px solid #828790;
  background: #fff;
}
.projectList label {
  gap: 2px;
  height: 23px;
}
.projectList span {
  padding: 0 4px;
  border: 1px solid transparent;
  border-radius: 3px;
  line-height: 20px;
}
.projectList .highlighted {
  border-color: #84acdd;
  background: linear-gradient(#e2eefc, #c9dffa);
}
.projectBtns {
  display: grid;
  align-content: start;
  gap: 9px;
}
.copyRow {
  height: 20px;
  margin: 18px 0 14px 6px;
}
fieldset {
  min-width: 0;
  margin: 0;
  padding: 12px 15px 16px;
  border: 1px solid #d5dfe5;
  border-radius: 4px;
}
fieldset label {
  line-height: 20px;
}
legend {
  margin-left: -8px;
  padding: 0 4px;
  line-height: 20px;
}
.setRow {
  display: flex;
  align-items: center;
  gap: 8px;
  margin-top: 9px;
}
.setRow label {
  width: 91px;
  white-space: nowrap;
  color: #9a9a9a;
}
.selectBox {
  position: relative;
  flex: 1;
}
.selectBox select {
  display: block;
  width: 100%;
  height: 30px;
  appearance: none;
  border: 1px solid #b5b5b5;
  border-radius: 3px;
  background: #f4f4f4;
}
.selectBox svg {
  position: absolute;
  top: 12px;
  right: 6px;
  width: 9px;
  height: 6px;
}
.dialogFooter {
  display: flex;
  align-items: center;
  height: 68px;
  padding: 0 15px 0 20px;
  border-top: 1px solid #a0a0a0;
}
.dialogFooter button {
  width: 116px;
}
.dialogFooter svg {
  width: 28px;
  height: 28px;
  margin-right: auto;
}
.dialogFooter .next {
  margin: 0 10px 0 3px;
}
.dialogFooter .finish {
  margin-right: 10px;
  border: 2px solid #3399bd;
  box-shadow: inset 0 0 0 1px #7fdcf7;
}

/* downloads */
.downloads {
  display: flex;
  align-items: center;
  flex: none;
  gap: 3px;
  height: 44px;
  padding: 0 14px 3px 4px;
  border-top: 1px solid #b9a08a;
  background: #d1b59d;
}
.download {
  display: flex;
  align-items: center;
  flex: 0 1 205px;
  gap: 10px;
  height: 35px;
  padding-left: 8px;
  border: 1px solid #a08673;
  border-radius: 3px;
  box-shadow: inset 0 1px 0 #f0e2d5;
  background: #dcc7b4;
  white-space: nowrap;
}
.download > svg {
  width: 18px;
  height: 18px;
}
.download span {
  flex: 1;
}
.download button {
  width: 14px;
  height: 33px;
  padding: 0 0 8px 3px;
  border-left: 1px solid #a08673;
}
.download button svg {
  width: 6px;
  height: 4px;
}
.showAll {
  display: flex;
  gap: 6px;
  margin-left: auto;
  white-space: nowrap;
  text-decoration: underline;
}
.showAll svg {
  width: 14px;
  height: 14px;
}
.closeShelf {
  margin-left: 18px;
}
.closeShelf svg {
  width: 8px;
  height: 8px;
}

/* taskbar */
.taskbar {
  display: flex;
  flex: none;
  height: 39px;
  border-top: 1px solid #3f4e60;
  background: #a7bfdc;
}
.start {
  width: 59px;
  padding-left: 9px;
  background: #7c93b1;
}
.start svg {
  width: 36px;
  height: 36px;
}
.app {
  display: flex;
  width: 62px;
  padding-right: 3px;
}
.app button {
  display: flex;
  flex: 1;
  align-items: center;
  justify-content: center;
  border: 1px solid #4c6079;
  border-radius: 3px;
  box-shadow: inset 0 0 0 1px #d5e2f1;
  background: linear-gradient(135deg, #cfdcec, #a9c0dc);
}
.app.front button {
  background: linear-gradient(135deg, #f3f6fa, #d0dcea);
}
.app.alert button {
  background: linear-gradient(135deg, #fbe7a0, #ec8c2c);
}
.app i {
  width: 4px;
  border: 1px solid #5d7390;
  border-left: 0;
  border-radius: 0 3px 3px 0;
  background: #bdd0e6;
}
.app svg {
  width: 32px;
  height: 32px;
}
.tray {
  display: flex;
  align-items: center;
  margin-left: auto;
  padding-left: 42px;
  background: linear-gradient(90deg, #a7bfdc, #7488a4 30px);
}
.tray svg {
  width: 18px;
  height: 18px;
  margin-right: 7px;
}
.tray .up {
  width: 8px;
  height: 5px;
  margin-right: 11px;
}
.clock {
  display: grid;
  width: 70px;
  line-height: 17px;
  text-align: center;
  color: #fff;
}
.showDesktop {
  width: 14px;
  height: 38px;
  border: 1px solid #3c4c60;
  background: linear-gradient(#8496ac, #4f6177);
}

/* pen marks */
.ink {
  position: absolute;
  top: 0;
  left: 0;
  width: 100%;
  height: 100%;
  pointer-events: none;
  fill: none;
  stroke: #d3202c;
  stroke-width: 1;
}
</style>
